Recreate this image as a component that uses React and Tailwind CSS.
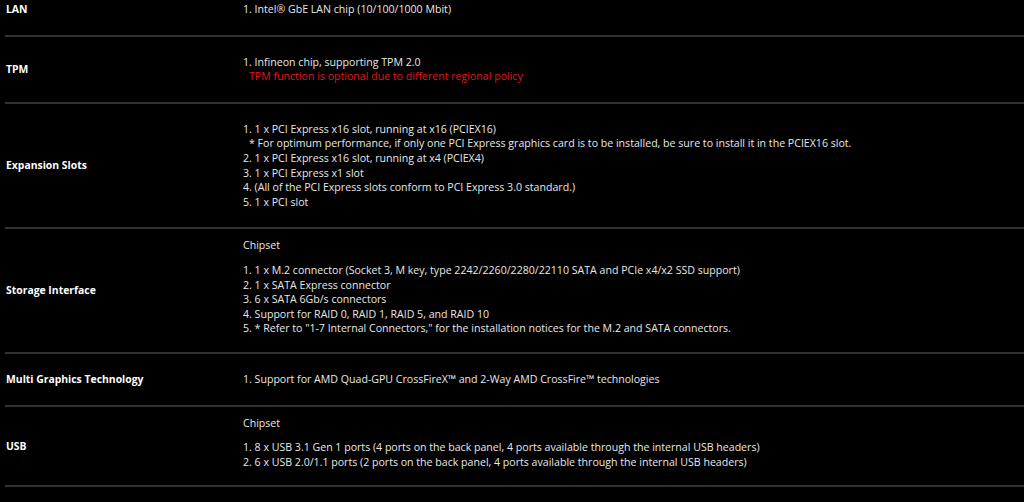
import React from "react";

const specs = [
  {
    label: "LAN",
    first: true,
    items: ["1. Intel\u00ae GbE LAN chip (10/100/1000 Mbit)"],
  },
  {
    label: "TPM",
    items: [
      "1. Infineon chip, supporting TPM 2.0",
      { text: "TPM function is optional due to different regional policy", red: true },
    ],
  },
  {
    label: "Expansion Slots",
    items: [
      "1. 1 x PCI Express x16 slot, running at x16 (PCIEX16)",
      { text: "* For optimum performance, if only one PCI Express graphics card is to be installed, be sure to install it in the PCIEX16 slot.", indent: true },
      "2. 1 x PCI Express x16 slot, running at x4 (PCIEX4)",
      "3. 1 x PCI Express x1 slot",
      "4. (All of the PCI Express slots conform to PCI Express 3.0 standard.)",
      "5. 1 x PCI slot",
    ],
  },
  {
    label: "Storage Interface",
    heading: "Chipset",
    items: [
      "1. 1 x M.2 connector (Socket 3, M key, type 2242/2260/2280/22110 SATA and PCIe x4/x2 SSD support)",
      "2. 1 x SATA Express connector",
      "3. 6 x SATA 6Gb/s connectors",
      "4. Support for RAID 0, RAID 1, RAID 5, and RAID 10",
      "5. * Refer to \"1-7 Internal Connectors,\" for the installation notices for the M.2 and SATA connectors.",
    ],
  },
  {
    label: "Multi Graphics Technology",
    items: ["1. Support for AMD Quad-GPU CrossFireX\u2122 and 2-Way AMD CrossFire\u2122 technologies"],
  },
  {
    label: "USB",
    heading: "Chipset",
    items: [
      "1. 8 x USB 3.1 Gen 1 ports (4 ports on the back panel, 4 ports available through the internal USB headers)",
      "2. 6 x USB 2.0/1.1 ports (2 ports on the back panel, 4 ports available through the internal USB headers)",
    ],
  },
];

const SpecRow = ({ row }) => {
  let pad = "py-[18px]";
  if (row.first) pad = "pt-[2px] pb-[18px]";
  else if (row.heading) pad = "pt-[9px] pb-[16px]";

  return (
    <div className="flex items-center border-b-2 border-[#303030]">
      <div
        className={`w-[238px] shrink-0 pl-px text-[10.4px] font-bold text-white ${
          row.first ? "self-start pt-[2px]" : ""
        }`}
      >
        {row.label}
      </div>
      <div className={`flex-1 ${pad}`}>
        {row.heading && <p className="mb-[10px]">{row.heading}</p>}
        {row.items.map((item, i) => {
          if (typeof item === "string") return <p key={i}>{item}</p>;
          return (
            <p key={i} className={`pl-[6px] ${item.red ? "text-[#e0141e]" : ""}`}>
              {item.text}
            </p>
          );
        })}
      </div>
    </div>
  );
};

export default function App() {
  return (
    <div
      className="min-h-[502px] w-[1024px] overflow-hidden bg-black pl-[5px] text-[10.6px] leading-[14.6px] text-[#e8e8e8]"
      style={{ fontFamily: '"Open Sans", "Noto Sans", sans-serif' }}
    >
      {specs.map((row) => (
        <SpecRow key={row.label} row={row} />
      ))}
    </div>
  );
}
